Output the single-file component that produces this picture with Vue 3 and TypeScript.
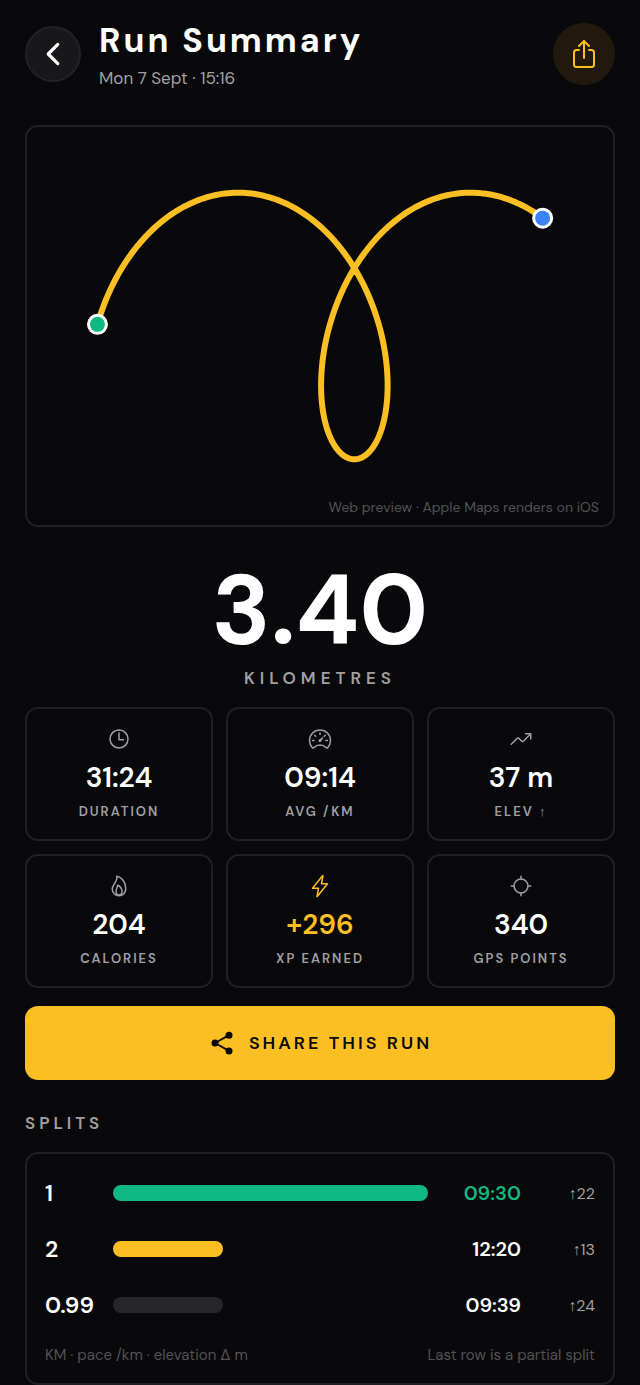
<script setup lang="ts">
interface Stat {
  icon: string
  value: string
  label: string
  arrow?: string
  accent?: boolean
}

interface Split {
  km: string
  pace: string
  gain: number
  share: number
  tone: 'best' | 'full' | 'partial'
}

const stats: Stat[] = [
  { icon: 'time', value: '31:24', label: 'DURATION' },
  { icon: 'speed', value: '09:14', label: 'AVG /KM' },
  { icon: 'trend', value: '37 m', label: 'ELEV ', arrow: '↑' },
  { icon: 'flame', value: '204', label: 'CALORIES' },
  { icon: 'flash', value: '+296', label: 'XP EARNED', accent: true },
  { icon: 'locate', value: '340', label: 'GPS POINTS' },
]

const splits: Split[] = [
  { km: '1', pace: '09:30', gain: 22, share: 100, tone: 'best' },
  { km: '2', pace: '12:20', gain: 13, share: 35, tone: 'full' },
  { km: '0.99', pace: '09:39', gain: 24, share: 35, tone: 'partial' },
]

// The route is a looping curve sampled once per GPS point.
const samples = 340
const points = Array.from({ length: samples }, (_, i) => {
  const t = 0.0125 + (i / (samples - 1)) * 8.47
  return {
    x: 153 + 37 * t - 83 * Math.cos(t),
    y: 199 - 133.3 * Math.sin(t),
  }
})
const route = points.map((p) => `${p.x.toFixed(2)},${p.y.toFixed(2)}`).join(' ')
const start = points[0]
const finish = points[points.length - 1]
</script>

<template>
  <main class="screen">
    <header class="top">
      <button class="back" type="button" aria-label="Back">
        <svg viewBox="0 0 512 512" class="icon">
          <polyline points="328 112 184 256 328 400" stroke-width="48" />
        </svg>
      </button>
      <div class="heading">
        <h1>Run Summary</h1>
        <p>Mon 7 Sept · 15:16</p>
      </div>
      <button class="export" type="button" aria-label="Share">
        <svg viewBox="0 0 512 512" class="icon">
          <path d="M336 192h40a40 40 0 0140 40v192a40 40 0 01-40 40H136a40 40 0 01-40-40V232a40 40 0 0140-40h40" />
          <polyline points="336 128 256 48 176 128" />
          <path d="M256 321V48" />
        </svg>
      </button>
    </header>

    <section class="map" aria-label="Route">
      <svg viewBox="0 0 586 398" class="route">
        <polyline :points="route" />
        <circle class="start" :cx="start.x" :cy="start.y" r="9" />
        <circle class="finish" :cx="finish.x" :cy="finish.y" r="9" />
      </svg>
      <p class="note">Web preview · Apple Maps renders on iOS</p>
    </section>

    <section class="distance">
      <strong>3.40</strong>
      <span>KILOMETRES</span>
    </section>

    <section class="stats">
      <article v-for="s in stats" :key="s.label" class="stat" :class="{ accent: s.accent }">
        <svg viewBox="0 0 512 512" class="icon" aria-hidden="true">
          <template v-if="s.icon === 'time'">
            <path d="M256 64C150 64 64 150 64 256s86 192 192 192 192-86 192-192S362 64 256 64z" />
            <polyline points="256 128 256 272 352 272" />
          </template>
          <template v-else-if="s.icon === 'speed'">
            <path
              class="solid"
              d="M326.1 231.9l-47.5 75.5a31 31 0 01-7 7 30.11 30.11 0 01-35-49l75.5-47.5a10.23 10.23 0 0111.7 0 10.06 10.06 0 012.3 14z"
            />
            <path
              d="M256 64C132.3 64 32 164.2 32 287.9a223.18 223.18 0 0056.3 148.5c1.1 1.2 2.1 2.4 3.2 3.5a25.19 25.19 0 0037.1-.1 173.13 173.13 0 01254.8 0 25.19 25.19 0 0037.1.1l3.2-3.5A223.18 223.18 0 00480 287.9C480 164.2 379.7 64 256 64z"
            />
            <path d="M256 128v32M416 288h-32M128 288H96M165.49 197.49l-22.63-22.63M346.51 197.49l22.63-22.63" />
          </template>
          <template v-else-if="s.icon === 'trend'">
            <polyline points="352 144 464 144 464 256" />
            <path d="M48 368l121.37-121.37a32 32 0 0145.26 0l50.74 50.74a32 32 0 0045.26 0L448 160" />
          </template>
          <template v-else-if="s.icon === 'flame'">
            <path d="M112 320c0-93 124-165 96-272 66 0 192 96 192 272a144 144 0 01-288 0z" />
            <path d="M320 368c0 57.71-32 80-64 80s-64-22.29-64-80 40-86 32-128c42 0 96 70.29 96 128z" />
          </template>
          <template v-else-if="s.icon === 'flash'">
            <path
              d="M315.27 33L96 304h128l-31.51 173.23a2.36 2.36 0 002.33 2.77 2.36 2.36 0 001.89-.95L416 208H288l31.66-173.25a2.45 2.45 0 00-4.39-1.75z"
            />
          </template>
          <template v-else>
            <circle cx="256" cy="256" r="148" />
            <path d="M256 104V48M256 464v-56M408 256h56M48 256h56" />
          </template>
        </svg>
        <strong>{{ s.value }}</strong>
        <span>{{ s.label }}<i v-if="s.arrow" class="arrow">{{ s.arrow }}</i></span>
      </article>
    </section>

    <button class="share" type="button">
      <svg viewBox="0 0 512 512" class="icon" aria-hidden="true">
        <path d="M384 112L128 256l256 144" />
        <g class="solid">
          <circle cx="384" cy="112" r="64" />
          <circle cx="128" cy="256" r="64" />
          <circle cx="384" cy="400" r="64" />
        </g>
      </svg>
      SHARE THIS RUN
    </button>

    <h2 id="splits-title">SPLITS</h2>
    <section class="splits">
      <table aria-labelledby="splits-title">
        <tbody>
          <tr v-for="s in splits" :key="s.km" :class="s.tone">
            <th scope="row">{{ s.km }}</th>
            <td class="track"><div class="bar" :style="{ width: s.share + '%' }"></div></td>
            <td class="pace">{{ s.pace }}</td>
            <td class="gain"><i class="arrow">↑</i>{{ s.gain }}</td>
          </tr>
        </tbody>
      </table>
      <footer>
        <span>KM · pace /km · elevation Δ m</span>
        <span>Last row is a partial split</span>
      </footer>
    </section>
  </main>
</template>

<style>
html,
body {
  background: #09090b;
}
</style>

<style scoped>
.screen {
  box-sizing: border-box;
  padding: 17px 25px 0;
  color: #fff;
  background: #09090b;
  font-family: "DM Sans", Inter, "Liberation Sans", sans-serif;
  font-optical-sizing: none;
}

h1,
h2,
p {
  margin: 0;
}

button {
  border: 0;
  padding: 0;
  font: inherit;
  font-optical-sizing: none;
  cursor: pointer;
}

.icon {
  display: block;
  flex: none;
  width: 24px;
  height: 24px;
  fill: none;
  stroke: currentColor;
  stroke-width: 32;
  stroke-linecap: round;
  stroke-linejoin: round;
}

.icon .solid {
  fill: currentColor;
  stroke: none;
}

.arrow {
  font-family: "Liberation Sans", sans-serif;
  font-style: normal;
  font-weight: 400;
}

.top {
  display: flex;
  align-items: center;
  margin-bottom: 34px;
}

.back,
.export {
  display: flex;
  flex: none;
  align-items: center;
  justify-content: center;
  border-radius: 50%;
}

.back {
  box-sizing: border-box;
  width: 56px;
  height: 56px;
  border: 2px solid #222225;
  background: #18181b;
  color: #fff;
}

.back .icon {
  width: 34px;
  height: 34px;
}

.export {
  width: 62px;
  height: 62px;
  background: #21190d;
  color: #fbbf24;
}

.export .icon {
  width: 32px;
  height: 32px;
}

.heading {
  flex: 1;
  margin-left: 18px;
}

h1 {
  font-size: 34px;
  font-weight: 700;
  line-height: 48px;
  letter-spacing: 3px;
}

.heading p {
  color: #a0a0a4;
  font-size: 17px;
  line-height: 26px;
}

.map,
.stat,
.splits {
  border: 2px solid #202023;
  border-radius: 13px;
}

.map {
  position: relative;
}

.route {
  display: block;
  width: 100%;
  height: auto;
}

.route polyline {
  fill: none;
  stroke: #fbbf24;
  stroke-width: 6;
  stroke-linejoin: round;
}

.route circle {
  stroke: #fff;
  stroke-width: 3;
}

.start {
  fill: #10b981;
}

.finish {
  fill: #3b82f6;
}

.note {
  position: absolute;
  right: 14px;
  bottom: 8px;
  color: #525256;
  font-size: 14px;
  line-height: 20px;
}

.distance {
  display: flex;
  flex-direction: column;
  align-items: center;
  gap: 7px;
  margin: 36px 0 17px;
}

.distance strong {
  font-size: 98px;
  font-weight: 700;
  line-height: 96px;
}

.distance span {
  color: #a0a0a4;
  font-size: 17px;
  font-weight: 600;
  line-height: 24px;
  letter-spacing: 5px;
}

.stats {
  display: grid;
  grid-template-columns: repeat(3, 1fr);
  gap: 13px;
}

.stat {
  display: flex;
  flex-direction: column;
  align-items: center;
  padding: 18px 0;
  color: #a0a0a4;
}

.stat strong {
  margin: 11px 0 9px;
  color: #fff;
  font-size: 28px;
  font-weight: 600;
  line-height: 32px;
}

.stat span {
  font-size: 13px;
  font-weight: 600;
  line-height: 18px;
  letter-spacing: 2px;
  white-space: pre;
}

.accent .icon,
.accent strong {
  color: #fbbf24;
}

.share {
  display: flex;
  align-items: center;
  justify-content: center;
  gap: 13px;
  width: 100%;
  height: 74px;
  margin-top: 18px;
  border-radius: 13px;
  background: #fbbf24;
  color: #09090b;
  font-size: 18px;
  font-weight: 600;
  letter-spacing: 3px;
}

.share .icon {
  width: 28px;
  height: 28px;
}

h2 {
  margin: 33px 0 19px;
  color: #a0a0a4;
  font-size: 17px;
  font-weight: 600;
  line-height: 20px;
  letter-spacing: 4px;
}

.splits {
  padding: 11px 18px 18px;
}

table {
  width: 100%;
  table-layout: fixed;
  border-collapse: collapse;
}

th,
td {
  height: 56px;
  padding: 0;
  text-align: right;
}

th {
  width: 68px;
  font-size: 23px;
  font-weight: 600;
  text-align: left;
}

.bar {
  height: 16px;
  border-radius: 8px;
  background: #fbbf24;
}

.best .bar {
  background: #10b981;
}

.partial .bar {
  background: #27272a;
}

.pace {
  width: 93px;
  font-size: 20px;
  font-weight: 600;
}

.best .pace {
  color: #10b981;
}

.gain {
  width: 74px;
  color: #a0a0a4;
  font-size: 16px;
}

footer {
  display: flex;
  justify-content: space-between;
  margin-top: 12px;
  color: #525256;
  font-size: 15px;
  line-height: 20px;
}
</style>
